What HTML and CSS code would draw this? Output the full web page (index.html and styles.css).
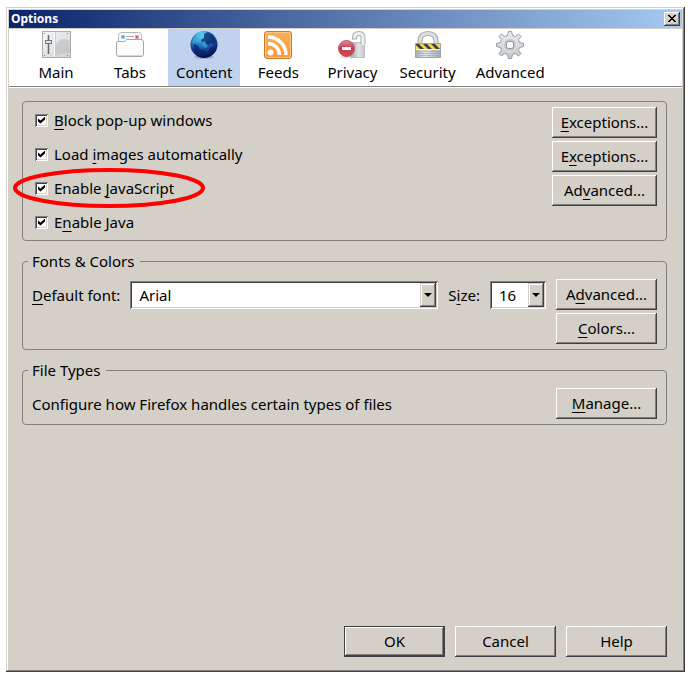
FILE: index.html
```html
<!DOCTYPE html>
<html lang="en">

<head>
    <meta charset="UTF-8">
    <meta name="viewport" content="width=device-width, initial-scale=1.0">
    <title>Options</title>
    <link rel="stylesheet" href="styles.css">
</head>

<body>
    <div class="window">
        <div class="titlebar">
            <h1 class="title">Options</h1>
            <button class="close" type="button" aria-label="Close">
                <svg width="8" height="7" viewBox="0 0 8 7" shape-rendering="crispEdges">
                    <path d="M0 0h2v1h1v1h2v-1h1v-1h2v1h-1v1h-1v1h-1v1h1v1h1v1h1v1h-2v-1h-1v-1h-2v1h-1v1h-2v-1h1v-1h1v-1h1v-1h-1v-1h-1v-1h-1z" />
                </svg>
            </button>
        </div>

        <div class="toolbar">
            <button class="tab" type="button">
                <svg class="icon" viewBox="0 0 28 28">
                    <defs>
                        <linearGradient id="panel" x1="0" y1="0" x2="1" y2="1">
                            <stop offset="0" stop-color="#f6f6f6" />
                            <stop offset="1" stop-color="#d2d3d4" />
                        </linearGradient>
                    </defs>
                    <rect x="0.5" y="0.5" width="28" height="26" fill="url(#panel)" stroke="#a9acae" />
                    <path d="M14 13q3-5 8-5 4 0 5.500 2v12q-8 0-13.500 3z" fill="#bfc0c2" opacity="0.700" />
                    <path d="M12.500 1v25" stroke="#fff" />
                    <path d="M13.500 1v25" stroke="#c8cacc" />
                    <path d="M6.500 4v19" stroke="#5f6a73" stroke-width="1.500" />
                    <rect x="3.500" y="9.500" width="6" height="3" fill="#dfe6ec" stroke="#6d7982" />
                    <path d="M2 2h1v1h-1zM25 2h1v1h-1zM2 24h1v1h-1zM25 24h1v1h-1z" fill="#777" />
                </svg>
                Main
            </button>
            <button class="tab" type="button">
                <svg class="icon" viewBox="0 0 28 28">
                    <path d="M2.500 10V4.500q0-3 3-3h17q3 0 3 3V10" fill="#fafafa" stroke="#b5b8bb" />
                    <rect x="5.500" y="4.500" width="3" height="3" fill="#4c9ae0" stroke="#a5ccee" />
                    <path d="M10 5.500h8" stroke="#a4a8ad" />
                    <rect x="19.500" y="4.500" width="3" height="3" fill="#cc5f5f" stroke="#e6a9a9" />
                    <path d="M0.500 12q0-1.500 1.500-1.500h6.500l2-2H25q2.500 0 2.500 2.500v12q0 2.500-2.500 2.500H3Q0.500 25.500 0.500 23z" fill="#fdfdfd" stroke="#a3a8ad" />
                    <path d="M2 24q1 0.500 3 0.500h18q2 0 3-0.500" stroke="#d5d8db" fill="none" />
                </svg>
                Tabs
            </button>
            <button class="tab selected" type="button">
                <svg class="icon" viewBox="0 0 28 28">
                    <defs>
                        <radialGradient id="globe" cx="0.400" cy="0.150" r="0.850">
                            <stop offset="0" stop-color="#6ad6f2" />
                            <stop offset="0.400" stop-color="#2185c9" />
                            <stop offset="0.700" stop-color="#133d94" />
                            <stop offset="1" stop-color="#050a3c" />
                        </radialGradient>
                    </defs>
                    <ellipse cx="14" cy="26" rx="10" ry="2" fill="#8595bd" opacity="0.600" />
                    <circle cx="14" cy="13.500" r="13.500" fill="url(#globe)" />
                    <path d="M14 3l4-2 5 3 3 6-2 3-3-1-2 2-3-1-1-3-3 1-1-2 3-2zM4 13l4 2 2 3 4 1 2 3-3 3-5-2-4-4zM20 17l4-1-2 6-4 2z" fill="#0a2163" opacity="0.700" />
                    <path d="M3 8l5-5 4 0 0 2-3 2 2 3-3 2-2-1-2 2-2-1zM12 13l3-1 3 3-2 2-3-1z" fill="#45b4de" opacity="0.500" />
                </svg>
                Content
            </button>
            <button class="tab" type="button">
                <svg class="icon" viewBox="0 0 28 28">
                    <defs>
                        <linearGradient id="feed" x1="0" y1="0" x2="0" y2="1">
                            <stop offset="0" stop-color="#f3b35a" />
                            <stop offset="1" stop-color="#ff9636" />
                        </linearGradient>
                    </defs>
                    <rect x="0.500" y="0.500" width="27" height="27" rx="2.500" fill="url(#feed)" stroke="#c77a2c" />
                    <rect x="1.500" y="1.500" width="25" height="25" rx="2" fill="none" stroke="#fbc988" />
                    <circle cx="6.500" cy="21.500" r="3" fill="#fff" />
                    <path d="M4 12.500a11.500 11.500 0 0 1 11.500 11.500M4 6a18 18 0 0 1 18 18" fill="none" stroke="#fff" stroke-width="3.500" />
                </svg>
                Feeds
            </button>
            <button class="tab" type="button">
                <svg class="icon" viewBox="0 0 28 28">
                    <defs>
                        <linearGradient id="lock" x1="0" y1="0" x2="1" y2="0">
                            <stop offset="0" stop-color="#9fa3a6" />
                            <stop offset="0.600" stop-color="#e2e4e5" />
                            <stop offset="1" stop-color="#c3c7ca" />
                        </linearGradient>
                        <linearGradient id="stop" x1="0" y1="0" x2="0" y2="1">
                            <stop offset="0" stop-color="#e58b94" />
                            <stop offset="0.500" stop-color="#c93a4c" />
                            <stop offset="1" stop-color="#d9485a" />
                        </linearGradient>
                    </defs>
                    <ellipse cx="13" cy="26" rx="12" ry="1.500" fill="#e8e8e8" />
                    <path d="M12.500 11.500h14v15h-14z" fill="url(#lock)" stroke="#bcc0c3" />
                    <path d="M16.500 8.500V7q0-4.500 4.500-4.500T25 7v6" fill="none" stroke="#a9adb0" stroke-width="5" />
                    <path d="M16.500 7.500V7q0-4.500 4.500-4.500T25 7v7" fill="none" stroke="#eff0f0" stroke-width="3" />
                    <circle cx="8.500" cy="17.500" r="8" fill="url(#stop)" stroke="#bd5560" />
                    <path d="M4 17.500h9" stroke="#fff" stroke-width="3" />
                </svg>
                Privacy
            </button>
            <button class="tab" type="button">
                <svg class="icon" viewBox="0 0 28 28">
                    <defs>
                        <linearGradient id="body" x1="0" y1="0" x2="1" y2="0">
                            <stop offset="0" stop-color="#a9aeb3" />
                            <stop offset="0.400" stop-color="#e3e5e8" />
                            <stop offset="1" stop-color="#a3a9ae" />
                        </linearGradient>
                    </defs>
                    <path d="M6 13V10q0-7.500 8-7.500T22 10v3" fill="none" stroke="#a5a9ac" stroke-width="5" />
                    <path d="M6 13V10q0-7.500 8-7.500T22 10v3" fill="none" stroke="#dcdee0" stroke-width="3" />
                    <rect x="1.500" y="12.500" width="25" height="14" fill="url(#body)" stroke="#a0a5aa" />
                    <rect x="2" y="13" width="24" height="5" fill="#f6d555" />
                    <path d="M2 13h3l5 5H6l-4-4zM9 13h4l5 5h-4zM17 13h4l5 5h-4z" fill="#3f4043" />
                    <path d="M2 20.500h24M2 22.500h24M2 24.500h24" stroke="#a6acb1" opacity="0.700" />
                    <path d="M2 18.500h24" stroke="#eceef0" />
                </svg>
                Security
            </button>
            <button class="tab" type="button">
                <svg class="icon" viewBox="0 0 28 28">
                    <defs>
                        <linearGradient id="gear" x1="0" y1="0" x2="0" y2="1">
                            <stop offset="0" stop-color="#ececed" />
                            <stop offset="1" stop-color="#c3c8cd" />
                        </linearGradient>
                    </defs>
                    <path d="M12.500 0.500h3l1 4 3 1 3-2.500 2.500 2.500-2.500 3 1 3 4 1v3l-4 1-1 3 2.500 3-2.500 2.500-3-2.500-3 1-1 4h-3l-1-4-3-1-3 2.500L3 22.500l2.500-3-1-3-4-1v-3l4-1 1-3L3 5.500 5.500 3l3 2.500 3-1z" fill="url(#gear)" stroke="#939aa1" />
                    <circle cx="14" cy="14" r="6.500" fill="#c3c7ca" stroke="#e6e8e9" />
                    <rect x="10.500" y="10.500" width="7" height="7" rx="2" fill="#fff" stroke="#8a9198" />
                </svg>
                Advanced
            </button>
        </div>

        <div class="pane">
            <fieldset class="group content-group" aria-label="Content">
                <div class="checks">
                    <label class="check"><input type="checkbox" checked><span><u>B</u>lock pop-up windows</span></label>
                    <label class="check"><input type="checkbox" checked><span>Load <u>i</u>mages automatically</span></label>
                    <label class="check marked"><input type="checkbox" checked><span>Enable <u>J</u>avaScript</span>
                        <svg class="marker" viewBox="0 0 192 40">
                            <ellipse cx="96" cy="20" rx="94" ry="18" />
                        </svg>
                    </label>
                    <label class="check"><input type="checkbox" checked><span>E<u>n</u>able Java</span></label>
                </div>
                <div class="buttons wide">
                    <button class="button" type="button"><u>E</u>xceptions...</button>
                    <button class="button" type="button">E<u>x</u>ceptions...</button>
                    <button class="button" type="button">Ad<u>v</u>anced...</button>
                </div>
            </fieldset>

            <fieldset class="group">
                <legend>Fonts &amp; Colors</legend>
                <div class="row">
                    <div class="fields">
                        <label for="font"><u>D</u>efault font:</label>
                        <div class="dropdown font">
                            <select id="font">
                                <option>Arial</option>
                            </select>
                        </div>
                        <label for="size">S<u>i</u>ze:</label>
                        <div class="dropdown size">
                            <select id="size">
                                <option>16</option>
                            </select>
                        </div>
                    </div>
                    <div class="buttons">
                        <button class="button" type="button">A<u>d</u>vanced...</button>
                        <button class="button" type="button"><u>C</u>olors...</button>
                    </div>
                </div>
            </fieldset>

            <fieldset class="group">
                <legend>File Types</legend>
                <div class="row middle">
                    <span class="description">Configure how Firefox handles certain types of files</span>
                    <div class="buttons">
                        <button class="button" type="button"><u>M</u>anage...</button>
                    </div>
                </div>
            </fieldset>

            <div class="footer">
                <button class="button default" type="submit">OK</button>
                <button class="button" type="button">Cancel</button>
                <button class="button" type="button">Help</button>
            </div>
        </div>
    </div>
</body>

</html>
```
FILE: styles.css
```css
* {
    box-sizing: border-box;
}

body {
    margin: 0;
    padding: 7px 6px 6px;
    min-height: 100vh;
    display: flex;
    background-color: #fff;
    color: #000;
    font-family: "Noto Sans", Tahoma, sans-serif;
    font-size: 15px;
    line-height: 20px;
}

button,
select {
    font: inherit;
    color: inherit;
}

u {
    text-decoration: underline 1px;
    text-underline-offset: 3px;
    text-decoration-skip-ink: none;
}

.window {
    flex: 1;
    display: flex;
    flex-direction: column;
    padding: 3px;
    background-color: #d4d0c8;
    box-shadow: inset -1px -1px #404040, inset 1px 1px #d4d0c8, inset -2px -2px #808080, inset 2px 2px #fff;
}

/* Title bar */
.titlebar {
    display: flex;
    align-items: center;
    justify-content: space-between;
    height: 18px;
    padding: 0 2px;
    background: linear-gradient(to right, #0a246a, #a6caf0);
}

.title {
    margin: 0;
    color: #fff;
    font-size: 12px;
    line-height: 18px;
    font-weight: bold;
}

.close {
    display: flex;
    align-items: center;
    justify-content: center;
    width: 16px;
    height: 14px;
    padding: 0 1px 1px 0;
    border: none;
    background-color: #d4d0c8;
    box-shadow: inset -1px -1px #404040, inset 1px 1px #fff, inset -2px -2px #808080;
}

/* Toolbar */
.toolbar {
    display: flex;
    gap: 2px;
    margin-top: 1px;
    padding-left: 11px;
    background-color: #fff;
    border-bottom: 1px solid #808080;
    box-shadow: 0 1px #fff;
}

.tab {
    display: flex;
    flex-direction: column;
    align-items: center;
    gap: 3px;
    min-width: 72px;
    height: 57px;
    padding: 2px 9px;
    border: none;
    background: none;
}

.tab.selected {
    padding: 2px 8px;
    background-color: #c1d2ee;
}

.icon {
    width: 28px;
    height: 28px;
    overflow: visible;
}

/* Content pane */
.pane {
    flex: 1;
    display: flex;
    flex-direction: column;
    gap: 10px;
    padding: 14px 15px 12px 13px;
}

.group {
    min-width: 0;
    margin: 0;
    padding: 8px 9px 5px;
    border: 1px solid #808080;
    border-radius: 4px;
}

legend {
    margin-left: -4px;
    padding: 0 6px 0 4px;
}

.content-group {
    display: flex;
    justify-content: space-between;
    padding: 5px 9px 5px 12px;
}

.checks {
    display: flex;
    flex-direction: column;
    gap: 10px;
    padding: 1px 0;
}

.check {
    display: flex;
    align-items: center;
    gap: 6px;
    height: 24px;
}

.check input {
    appearance: none;
    display: grid;
    place-items: center;
    width: 13px;
    height: 13px;
    margin: 0;
    background-color: #fff;
    box-shadow: inset 1px 1px #808080, inset -1px -1px #fff, inset 2px 2px #404040, inset -2px -2px #d4d0c8;
}

.check input:checked::before {
    content: "";
    width: 7px;
    height: 7px;
    background-color: #000;
    clip-path: polygon(0 29%, 0 71%, 36% 100%, 100% 43%, 100% 0, 36% 57%);
}

.marked {
    position: relative;
}

.marker {
    position: absolute;
    left: -22px;
    top: -8px;
    width: 192px;
    height: 40px;
    pointer-events: none;
}

.marker ellipse {
    fill: none;
    stroke: #f00;
    stroke-width: 4px;
}

.buttons {
    display: flex;
    flex-direction: column;
    gap: 3px;
    width: 101px;
}

.buttons.wide {
    width: 105px;
}

.button {
    height: 31px;
    padding: 0 4px 2px;
    border: none;
    background-color: #d4d0c8;
    box-shadow: inset -1px -1px #404040, inset 1px 1px #fff, inset -2px -2px #808080;
}

.button.default {
    box-shadow: inset 0 0 0 1px #404040, inset -2px -2px #404040, inset 2px 2px #fff, inset -3px -3px #808080;
}

.row {
    display: flex;
    justify-content: space-between;
    gap: 10px;
}

.row.middle {
    align-items: center;
}

.fields {
    flex: 1;
    display: flex;
    align-items: center;
    gap: 10px;
    height: 32px;
}

.dropdown {
    position: relative;
    height: 28px;
}

.dropdown.font {
    flex: 1;
}

.dropdown.size {
    width: 56px;
}

.dropdown select {
    appearance: none;
    width: 100%;
    height: 100%;
    padding: 0 20px 0 9px;
    border: none;
    border-radius: 0;
    background-color: #fff;
    box-shadow: inset 1px 1px #808080, inset -1px -1px #fff, inset 2px 2px #404040, inset -2px -2px #d4d0c8;
}

/* Arrow button on top of the select */
.dropdown::before {
    content: "";
    position: absolute;
    top: 2px;
    right: 2px;
    bottom: 2px;
    width: 16px;
    background-color: #d4d0c8;
    box-shadow: inset -1px -1px #404040, inset 1px 1px #d4d0c8, inset -2px -2px #808080, inset 2px 2px #fff;
    pointer-events: none;
}

.dropdown::after {
    content: "";
    position: absolute;
    top: 12px;
    right: 6px;
    border: 4px solid transparent;
    border-top-color: #000;
    border-bottom: none;
    pointer-events: none;
}

/* Dialog buttons */
.footer {
    display: flex;
    justify-content: flex-end;
    gap: 10px;
    margin-top: auto;
}

.footer .button {
    width: 101px;
}
```
